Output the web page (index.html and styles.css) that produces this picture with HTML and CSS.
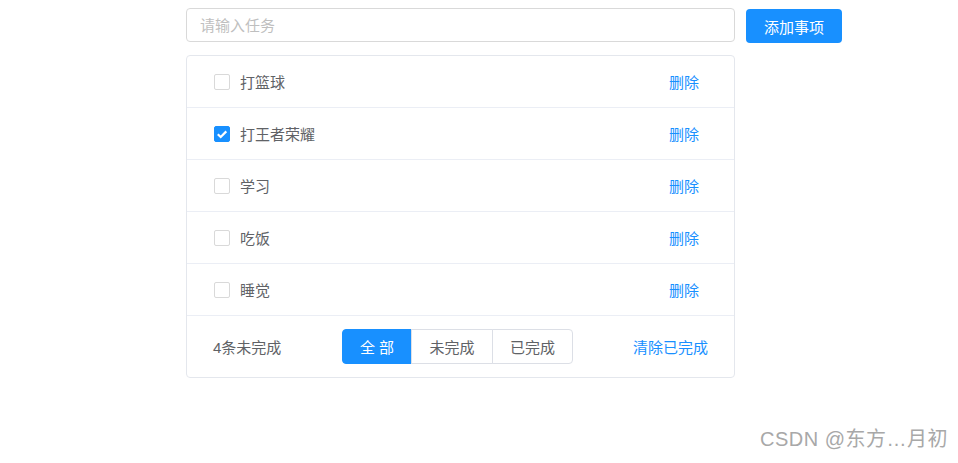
FILE: index.html
```html
<!DOCTYPE html>
<html lang="zh-CN">
<head>
    <meta charset="UTF-8">
    <title>待办事项</title>
    <link rel="stylesheet" href="styles.css">
</head>
<body>

<div class="todo">
    <div class="todo-head">
        <input class="todo-input" type="text" placeholder="请输入任务">
        <button class="btn-add">添加事项</button>
    </div>

    <div class="todo-list">
        <div class="todo-item">
            <label><span class="check"></span>打篮球</label>
            <a href="#" class="link">删除</a>
        </div>
        <div class="todo-item">
            <label><span class="check checked"><svg viewBox="0 0 16 16" width="16" height="16"><path d="M3.8 8.2l2.9 2.8L12.3 5.4" fill="none" stroke="#fff" stroke-width="2.2"/></svg></span>打王者荣耀</label>
            <a href="#" class="link">删除</a>
        </div>
        <div class="todo-item">
            <label><span class="check"></span>学习</label>
            <a href="#" class="link">删除</a>
        </div>
        <div class="todo-item">
            <label><span class="check"></span>吃饭</label>
            <a href="#" class="link">删除</a>
        </div>
        <div class="todo-item">
            <label><span class="check"></span>睡觉</label>
            <a href="#" class="link">删除</a>
        </div>

        <div class="todo-foot">
            <span class="count">4条未完成</span>
            <div class="filters">
                <button class="active">全 部</button>
                <button>未完成</button>
                <button>已完成</button>
            </div>
            <a href="#" class="link clear">清除已完成</a>
        </div>
    </div>
</div>

<div class="watermark">CSDN @东方…月初</div>

</body>
</html>
```

FILE: styles.css
```css
body {
    font-family: "Liberation Sans", "Noto Sans CJK SC", sans-serif;
    font-size: 15px;
    color: #606266;
    margin: 0;
    padding: 8px 0 0 186px;
    background: #fff;
}

.todo {
    width: 656px;
}

.todo-head {
    display: flex;
    align-items: flex-start;
    gap: 11px;
}

.todo-input {
    width: 549px;
    height: 34px;
    box-sizing: border-box;
    border: 1px solid #d9d9d9;
    border-radius: 4px;
    padding: 0 13px;
    font-family: inherit;
    font-size: 15px;
    color: #606266;
    outline: none;
}

.todo-input::placeholder {
    color: #bfbfbf;
}

.btn-add {
    margin-top: 1px;
    width: 96px;
    height: 34px;
    border: none;
    border-radius: 4px;
    background-color: #1890ff;
    color: #fff;
    font-family: inherit;
    font-size: 15px;
}

.todo-list {
    width: 549px;
    box-sizing: border-box;
    margin-top: 12px;
    border: 1px solid #e4e7ed;
    border-radius: 4px;
}

.todo-item {
    height: 51px;
    border-bottom: 1px solid #ebeef5;
    display: flex;
    align-items: center;
    justify-content: space-between;
    padding: 0 35px 0 27px;
}

.todo-item label {
    display: flex;
    align-items: center;
}

.check {
    width: 16px;
    height: 16px;
    box-sizing: border-box;
    border: 1px solid #d9d9d9;
    border-radius: 2px;
    margin-right: 10px;
    display: flex;
}

.check.checked {
    background-color: #1890ff;
    border-color: #1890ff;
}

.check svg {
    margin: -1px;
}

.link {
    color: #1890ff;
    text-decoration: none;
}

.todo-foot {
    height: 61px;
    display: flex;
    align-items: center;
    padding: 0 26px 0 26px;
}

.count {
    width: 129px;
}

.filters {
    display: flex;
}

.filters button {
    height: 35px;
    width: 81px;
    padding: 0;
    border: 1px solid #dcdfe6;
    margin-left: -1px;
    background: #fff;
    color: #606266;
    font-family: inherit;
    font-size: 15px;
    white-space: nowrap;
}

.filters button:first-child {
    border-radius: 4px 0 0 4px;
    margin-left: 0;
    width: 70px;
}

.filters button:nth-child(2) {
    width: 82px;
}

.filters button:last-child {
    border-radius: 0 4px 4px 0;
}

.filters button.active {
    background-color: #1890ff;
    border-color: #1890ff;
    color: #fff;
}

.clear {
    margin-left: auto;
}

.watermark {
    position: absolute;
    left: 760px;
    top: 423px;
    font-size: 20px;
    letter-spacing: 0.5px;
    color: #a8a8a8;
}
```
